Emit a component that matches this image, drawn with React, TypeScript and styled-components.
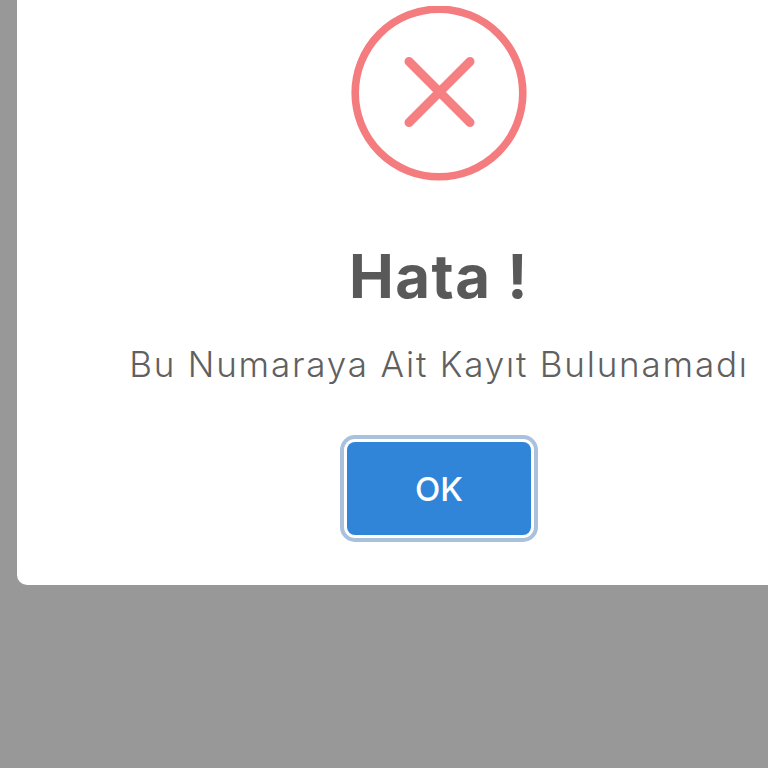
import React from 'react';
import styled, { createGlobalStyle } from 'styled-components';

const GlobalStyle = createGlobalStyle`
    html, body {
        margin: 0;
        padding: 0;
        background-color: #989898;
    }
`;

const Overlay = styled.div`
    width: 768px;
    height: 768px;
    overflow: hidden;
    background-color: #989898;
    display: flex;
    align-items: flex-start;
    font-family: Inter, "Noto Sans", sans-serif;
`;

const Dialog = styled.div`
    flex: 0 0 844px;
    height: 585px;
    margin-left: 17px;
    padding-top: 6px;
    box-sizing: border-box;
    background-color: #ffffff;
    border-radius: 0 0 10px 10px;
    display: flex;
    flex-direction: column;
    align-items: center;
`;

const Icon = styled.svg`
    width: 176px;
    height: 176px;
    display: block;
`;

const Title = styled.h2`
    margin: 59px 0 0;
    color: #595959;
    font-size: 60px;
    line-height: 70px;
    font-weight: 700;
    letter-spacing: 1.5px;
`;

const Message = styled.p`
    margin: 31px 0 0;
    color: #606060;
    font-size: 35px;
    line-height: 44px;
    font-weight: 300;
    letter-spacing: 1.8px;
    white-space: nowrap;
`;

const OkButton = styled.button`
    margin-top: 56px;
    width: 184px;
    height: 93px;
    border: none;
    border-radius: 8px;
    background-color: #3085d9;
    color: #ffffff;
    font-family: inherit;
    font-size: 33px;
    font-weight: 500;
    box-shadow: 0 0 0 3px #ffffff, 0 0 0 7px #a9c1dc;
`;

export default function App() {
    return (
        <Overlay>
            <GlobalStyle />
            <Dialog>
                <Icon viewBox="0 0 176 176">
                    <circle cx="88" cy="87" r="83.8" fill="none" stroke="#f47c7e" strokeWidth="7.6" />
                    <path d="M58 55.5 L119 116.5 M119 55.5 L58 116.5" fill="none" stroke="#f67f82" strokeWidth="9" strokeLinecap="round" />
                </Icon>
                <Title>Hata !</Title>
                <Message>Bu Numaraya Ait Kayıt Bulunamadı</Message>
                <OkButton>OK</OkButton>
            </Dialog>
        </Overlay>
    );
}
